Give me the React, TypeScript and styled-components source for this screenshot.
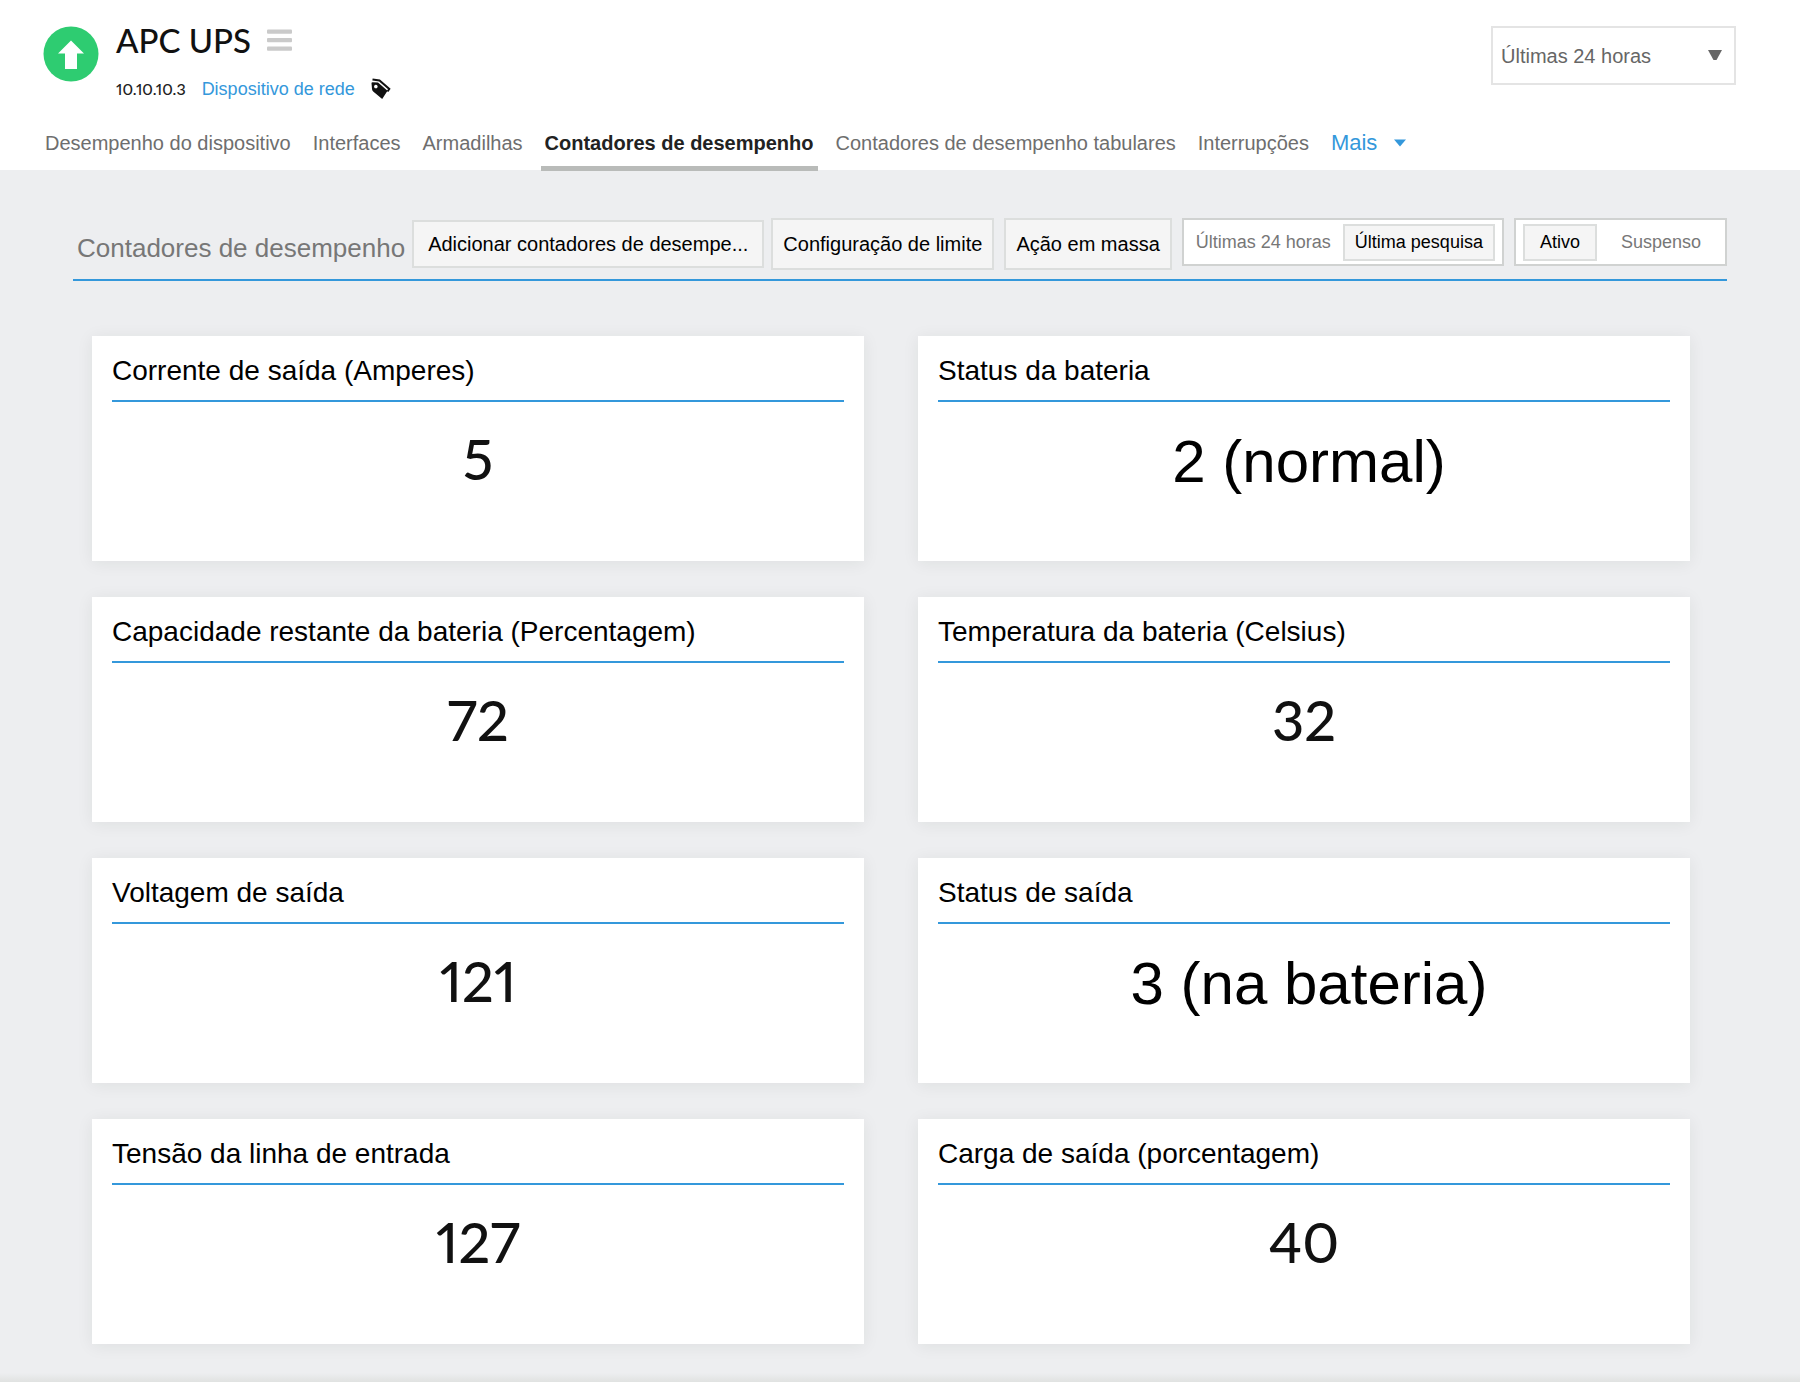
import React, { useState } from "react";
import styled, { createGlobalStyle } from "styled-components";

const sans = '"Liberation Sans", Arial, Helvetica, sans-serif';
const display = '"Lato Medium", Lato, "Open Sans", sans-serif';
const blue = "#3498db";

const GlobalStyle = createGlobalStyle`
  *, *::before, *::after { box-sizing: border-box; }
  body { margin: 0; background: #edeef0; font-family: ${sans}; color: #000; }
  button, select { font-family: inherit; margin: 0; cursor: pointer; }
  h1, h2, h3, p { margin: 0; font-weight: 400; }
`;

const Page = styled.div`
  min-height: 100vh;
  display: flex;
  flex-direction: column;
`;

const Header = styled.header`
  background: #fff;
  padding: 26px 64px 0 41px;
`;

const HeaderTop = styled.div`
  display: flex;
  justify-content: space-between;
  align-items: flex-start;
  height: 90px;
`;

const Device = styled.div`
  display: flex;
  gap: 17px;
  padding-left: 2px;
`;

const DeviceText = styled.div`
  display: flex;
  flex-direction: column;
  gap: 23px;
`;

const TitleRow = styled.div`
  display: flex;
  align-items: center;
  gap: 16px;
  height: 28px;
`;

const DeviceName = styled.h1`
  font: 500 33px/28px ${display};
  color: #111;
`;

const IconButton = styled.button`
  display: flex;
  padding: 0;
  border: 0;
  background: none;
`;

const MetaRow = styled.div`
  display: flex;
  align-items: center;
  gap: 16px;
  height: 24px;
  font-size: 18px;
`;

const Address = styled.span`
  font: 500 16px/24px ${display};
  font-variant-numeric: proportional-nums;
  color: #222;
`;

const DeviceLink = styled.a`
  color: ${blue};
  text-decoration: none;
`;

const PeriodField = styled.div`
  position: relative;
  width: 245px;
`;

const PeriodSelect = styled.select`
  appearance: none;
  width: 100%;
  height: 59px;
  padding: 0 40px 0 8px;
  border: 2px solid #e4e4e4;
  border-radius: 0;
  background: #fff;
  color: #666;
  font-size: 20px;
`;

const SelectArrow = styled.svg`
  position: absolute;
  right: 14px;
  top: 24px;
  pointer-events: none;
`;

const Tabs = styled.nav`
  display: flex;
  gap: 14px;
  height: 54px;
`;

const Tab = styled.a<{ $active?: boolean }>`
  padding: 14px 4px 0;
  height: 55px;
  border-bottom: 5px solid ${(p) => (p.$active ? "#b9bbb9" : "transparent")};
  color: ${(p) => (p.$active ? "#222" : "#6e6e6e")};
  font-size: 20px;
  font-weight: ${(p) => (p.$active ? 700 : 400)};
  line-height: 26px;
  text-decoration: none;
  white-space: nowrap;
`;

const MoreButton = styled.button`
  display: flex;
  align-items: center;
  gap: 17px;
  height: 26px;
  margin-top: 14px;
  padding: 0 4px;
  border: 0;
  background: none;
  color: ${blue};
  font-size: 22px;
  line-height: 26px;
`;

const Main = styled.main`
  flex: 1;
  padding: 48px 73px 29px;
`;

const Toolbar = styled.div`
  display: flex;
  justify-content: space-between;
  padding: 0 0 9px 4px;
  border-bottom: 2px solid ${blue};
`;

const ToolbarStart = styled.div`
  display: flex;
  align-items: center;
  gap: 7px;
`;

const ToolbarEnd = styled.div`
  display: flex;
  align-items: flex-start;
  gap: 10px;
`;

const SectionTitle = styled.h2`
  align-self: flex-end;
  font-size: 26px;
  line-height: 44px;
  color: #777;
  white-space: nowrap;
`;

const ActionButton = styled.button<{ $wide?: boolean }>`
  height: ${(p) => (p.$wide ? 48 : 52)}px;
  padding: 0 ${(p) => (p.$wide ? 14 : 10)}px;
  border: 2px solid #dcdedd;
  background: #f5f5f5;
  color: #000;
  font-size: 20px;
  white-space: nowrap;
`;

const Segmented = styled.div<{ $spread?: boolean }>`
  display: flex;
  align-items: center;
  height: 48px;
  padding: 0 ${(p) => (p.$spread ? 0 : 7)}px 0 ${(p) => (p.$spread ? 7 : 0)}px;
  border: 2px solid #d0d2d1;
  background: #fff;
`;

const Segment = styled.button<{ $selected: boolean; $pad?: number }>`
  height: 37px;
  padding: 0 ${(p) => p.$pad ?? 10}px;
  border: 2px solid ${(p) => (p.$selected ? "#dcdedd" : "transparent")};
  background: ${(p) => (p.$selected ? "#f5f5f5" : "transparent")};
  color: ${(p) => (p.$selected ? "#000" : "#777")};
  font-size: 18px;
  white-space: nowrap;
`;

const CardGrid = styled.section`
  display: grid;
  grid-template-columns: 1fr 1fr;
  gap: 36px 54px;
  padding: 55px 37px 0 19px;
`;

const Card = styled.article`
  min-height: 225px;
  padding: 0 20px;
  background: #fff;
  box-shadow: 0 2px 16px rgba(30, 45, 30, 0.07);
`;

const CardTitle = styled.h3`
  padding: 19px 0 13px;
  border-bottom: 2px solid ${blue};
  font-size: 28px;
  line-height: 32px;
`;

const CardValue = styled.p<{ $text: boolean }>`
  padding: ${(p) => (p.$text ? "26px 0 0 10px" : "23px 0 0")};
  text-align: center;
  font-family: ${(p) => (p.$text ? sans : display)};
  font-size: ${(p) => (p.$text ? 60 : 56)}px;
  font-weight: ${(p) => (p.$text ? 400 : 500)};
  font-variant-numeric: proportional-nums;
  line-height: 68px;
  color: ${(p) => (p.$text ? "#000" : "#111")};
`;

const FooterEdge = styled.footer`
  height: 9px;
  background: linear-gradient(#edeef0, #e0e2e1);
`;

const tabs = [
  "Desempenho do dispositivo",
  "Interfaces",
  "Armadilhas",
  "Contadores de desempenho",
  "Contadores de desempenho tabulares",
  "Interrupções",
];

const counters = [
  { title: "Corrente de saída (Amperes)", value: "5" },
  { title: "Status da bateria", value: "2 (normal)" },
  { title: "Capacidade restante da bateria (Percentagem)", value: "72" },
  { title: "Temperatura da bateria (Celsius)", value: "32" },
  { title: "Voltagem de saída", value: "121" },
  { title: "Status de saída", value: "3 (na bateria)" },
  { title: "Tensão da linha de entrada", value: "127" },
  { title: "Carga de saída (porcentagem)", value: "40" },
];

function StatusIcon() {
  return (
    <svg width="56" height="56" viewBox="0 0 56 56" role="img" aria-label="Ativo">
      <circle cx="28" cy="28" r="27.5" fill="#2ecc71" />
      <path d="M28 14.5 41 27.5H34V43H22V27.5H15Z" fill="#fff" />
    </svg>
  );
}

function MenuIcon() {
  return (
    <svg width="26" height="22" viewBox="0 0 26 22" aria-hidden="true" fill="#cacaca">
      <rect y="0.5" width="25" height="4.200" rx="1" />
      <rect y="9" width="25" height="4.200" rx="1" />
      <rect y="17.500" width="25" height="4.200" rx="1" />
    </svg>
  );
}

function TagsIcon() {
  return (
    <svg width="20" height="22" viewBox="0 0 20 22" aria-hidden="true" fill="#111">
      <path
        fillRule="evenodd"
        d="M.5 5.200Q.5 4.200 1.500 4.200L7 4.500 16.500 12.800 11.200 21 2.200 13.500Q1.200 12.500 1 11ZM4.800 6.700a1.800 1.800 0 1 0 .1 0Z"
      />
      <path d="M1.500 1.500 8.500 2.500 18.300 11 16.500 13.500" fill="none" stroke="#111" strokeWidth="2" />
    </svg>
  );
}

export default function App() {
  const [range, setRange] = useState("poll");
  const [state, setState] = useState("active");
  return (
    <Page>
      <GlobalStyle />
      <Header>
        <HeaderTop>
          <Device>
            <StatusIcon />
            <DeviceText>
              <TitleRow>
                <DeviceName>APC UPS</DeviceName>
                <IconButton type="button" aria-label="Menu">
                  <MenuIcon />
                </IconButton>
              </TitleRow>
              <MetaRow>
                <Address>10.10.10.3</Address>
                <DeviceLink href="#tipo">Dispositivo de rede</DeviceLink>
                <IconButton type="button" aria-label="Etiquetas">
                  <TagsIcon />
                </IconButton>
              </MetaRow>
            </DeviceText>
          </Device>
          <PeriodField>
            <PeriodSelect aria-label="Período" defaultValue="24h">
              <option value="24h">Últimas 24 horas</option>
            </PeriodSelect>
            <SelectArrow width="14" height="10" viewBox="0 0 14 10" aria-hidden="true">
              <path d="M0 0H14L8.500 10H5.500Z" fill="#666" />
            </SelectArrow>
          </PeriodField>
        </HeaderTop>
        <Tabs>
          {tabs.map((name, i) => (
            <Tab key={name} href={"#aba-" + i} $active={i === 3} aria-current={i === 3 ? "page" : undefined}>
              {name}
            </Tab>
          ))}
          <MoreButton type="button">
            Mais
            <svg width="12" height="8" viewBox="0 0 12 8" aria-hidden="true">
              <path d="M0 0.5H12L6 7.500Z" fill={blue} />
            </svg>
          </MoreButton>
        </Tabs>
      </Header>
      <Main>
        <Toolbar>
          <ToolbarStart>
            <SectionTitle>Contadores de desempenho</SectionTitle>
            <ActionButton type="button" $wide>
              Adicionar contadores de desempe...
            </ActionButton>
            <ActionButton type="button">Configuração de limite</ActionButton>
          </ToolbarStart>
          <ToolbarEnd>
            <ActionButton type="button">Ação em massa</ActionButton>
            <Segmented role="group" aria-label="Intervalo">
              <Segment type="button" $selected={range === "day"} onClick={() => setRange("day")}>
                Últimas 24 horas
              </Segment>
              <Segment type="button" $selected={range === "poll"} onClick={() => setRange("poll")}>
                Última pesquisa
              </Segment>
            </Segmented>
            <Segmented role="group" aria-label="Estado" $spread>
              <Segment type="button" $pad={15} $selected={state === "active"} onClick={() => setState("active")}>
                Ativo
              </Segment>
              <Segment type="button" $pad={22} $selected={state === "suspended"} onClick={() => setState("suspended")}>
                Suspenso
              </Segment>
            </Segmented>
          </ToolbarEnd>
        </Toolbar>
        <CardGrid>
          {counters.map((c) => (
            <Card key={c.title}>
              <CardTitle>{c.title}</CardTitle>
              <CardValue $text={c.value.includes("(")}>{c.value}</CardValue>
            </Card>
          ))}
        </CardGrid>
      </Main>
      <FooterEdge />
    </Page>
  );
}
